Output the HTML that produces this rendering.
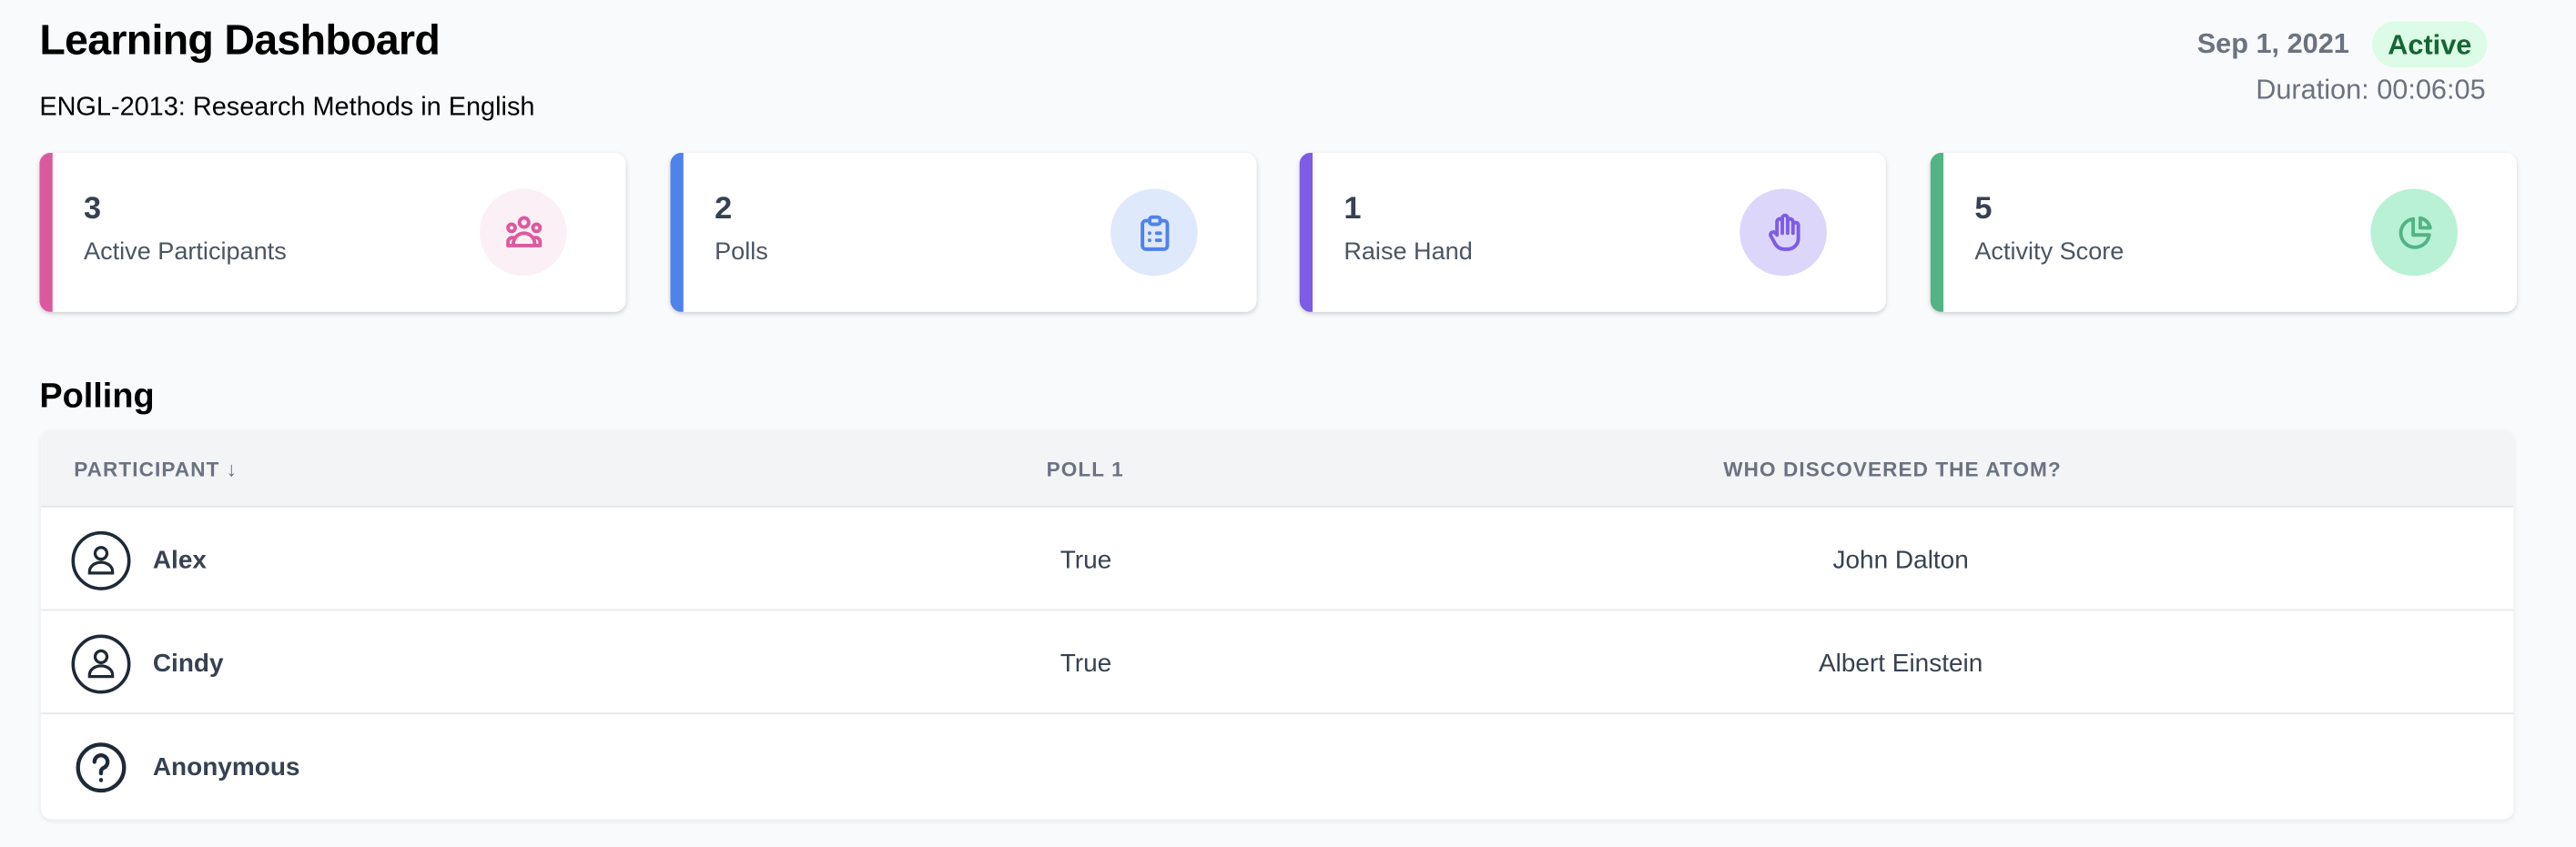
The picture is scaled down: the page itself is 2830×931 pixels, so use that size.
<!DOCTYPE html>
<html><head><meta charset="utf-8"><style>
*{box-sizing:border-box;margin:0;padding:0}
html,body{width:2830px;height:930px;overflow:hidden;background:#f9fafb;font-family:"Liberation Sans",sans-serif}
#w{position:absolute;left:0;top:0;width:1568px;height:516px;transform:scale(1.8048);transform-origin:0 0}
.a{position:absolute}
h1{position:absolute;left:24px;top:11px;font-size:25.8px;font-weight:700;color:#000;letter-spacing:-0.4px}
.sub{left:24px;top:57px;font-size:16px;color:#000;white-space:nowrap}
.date{top:17px;font-size:17px;font-weight:700;color:#6b7280}
.badge{left:1444px;top:13px;width:70px;height:28px;border-radius:14px;background:#dcfce7;color:#166534;font-size:17px;font-weight:700;text-align:center;line-height:29px}
.dur{right:55px;top:45px;font-size:17px;color:#6b7280}
.card{position:absolute;top:93px;width:357px;height:97px;background:#fff;border-radius:7px;box-shadow:0 1px 3px rgba(0,0,0,.12),0 1px 2px rgba(0,0,0,.06);overflow:hidden}
.card .bar{position:absolute;left:0;top:0;bottom:0;width:8px}
.card .n{position:absolute;left:27px;top:24px;font-size:19px;font-weight:700;color:#374151}
.card .l{position:absolute;left:27px;top:52px;font-size:15px;color:#4b5563}
.card .ic{position:absolute;left:268px;top:22px;width:53px;height:53px;border-radius:50%;display:flex;align-items:center;justify-content:center}
.pol{left:24px;top:230px;font-size:21px;font-weight:700;color:#000}
.tbl{position:absolute;left:25px;top:262px;width:1505px;height:237px;background:#fff;border-radius:6px;box-shadow:0 1px 3px rgba(0,0,0,.08);overflow:hidden}
.hd{height:47px;background:#f3f4f6;border-bottom:1px solid #e5e7eb;position:relative}
.hd div{position:absolute;top:17px;font-size:12.5px;font-weight:700;color:#6b7280;letter-spacing:.6px}
.row{height:63px;border-bottom:1px solid #e5e7eb;position:relative}
.row .nm{position:absolute;left:68px;top:24px;font-size:15.5px;font-weight:700;color:#374151}
.row .av{position:absolute;left:18px;top:14px}
.row .c{position:absolute;top:24px;font-size:15.5px;color:#374151;transform:translateX(-50%);white-space:nowrap}
</style></head><body><div id="w">
<h1>Learning Dashboard</h1>
<div class="a sub">ENGL-2013: Research Methods in English</div>
<div class="a date" style="right:138px">Sep 1, 2021</div>
<div class="a badge">Active</div>
<div class="a dur">Duration: 00:06:05</div>

<div class="card" style="left:24px"><div class="bar" style="background:#db5a9e"></div><div class="n">3</div><div class="l">Active Participants</div>
<div class="ic" style="background:#fbf0f6"><svg width="26" height="26" viewBox="0 0 24 24" fill="none" stroke="#db5a9e" stroke-width="2" stroke-linecap="round" stroke-linejoin="round"><circle cx="12" cy="6" r="2.6"/><circle cx="5" cy="9" r="2"/><circle cx="19" cy="9" r="2"/><path d="M6 19v-1a6 6 0 0 1 12 0v1zM3 19v-2.5a2.5 2.5 0 0 1 3-2M21 19v-2.5a2.5 2.5 0 0 0-3-2M3 19h18"/></svg></div></div>

<div class="card" style="left:408px"><div class="bar" style="background:#5082ec"></div><div class="n">2</div><div class="l">Polls</div>
<div class="ic" style="background:#dfe9fc"><svg width="26" height="26" viewBox="0 0 24 24" fill="none" stroke="#5082ec" stroke-width="2" stroke-linecap="round" stroke-linejoin="round"><path d="M9 5H7a2 2 0 0 0-2 2v12a2 2 0 0 0 2 2h10a2 2 0 0 0 2-2V7a2 2 0 0 0-2-2h-2"/><rect x="9" y="3" width="6" height="4" rx="1.5"/><path d="M9 12h.01M13 12h2M9 16h.01M13 16h2"/></svg></div></div>

<div class="card" style="left:791px"><div class="bar" style="background:#7d5ce8"></div><div class="n">1</div><div class="l">Raise Hand</div>
<div class="ic" style="background:#ddd6fb"><svg width="26" height="26" viewBox="0 0 24 24" fill="none" stroke="#7d5ce8" stroke-width="2" stroke-linecap="round" stroke-linejoin="round"><path d="M8 13V5.5a1.5 1.5 0 0 1 3 0V12M11 5.5v-2a1.5 1.5 0 0 1 3 0V12M14 5.5a1.5 1.5 0 0 1 3 0V12M17 7.5a1.5 1.5 0 0 1 3 0V15a6 6 0 0 1-6 6h-2a6 6 0 0 1-5-3l-2.5-4.5a1.5 1.5 0 0 1 2.5-1.6L8 13"/></svg></div></div>

<div class="card" style="left:1175px"><div class="bar" style="background:#52b484"></div><div class="n">5</div><div class="l">Activity Score</div>
<div class="ic" style="background:#b9f1d4"><svg width="26" height="26" viewBox="0 0 24 24" fill="none" stroke="#52b484" stroke-width="2" stroke-linecap="round" stroke-linejoin="round"><path d="M11 4a8 8 0 1 0 9 9h-9z"/><path d="M15 3.5A7 7 0 0 1 20.5 9H15z"/></svg></div></div>

<div class="a pol">Polling</div>
<div class="tbl">
<div class="hd"><div style="left:20px">PARTICIPANT ↓</div><div style="left:612px">POLL 1</div><div style="left:1024px">WHO DISCOVERED THE ATOM?</div></div>
<div class="row"><svg class="av" width="37" height="37" viewBox="0 0 37 37" fill="none" stroke="#1f2937" stroke-width="2"><circle cx="18.5" cy="18.5" r="17"/><circle cx="18.5" cy="14" r="3.6" stroke-width="1.8"/><path d="M11.5 26v-1a7 5.5 0 0 1 14 0v1z" stroke-width="1.8"/></svg><div class="nm">Alex</div><div class="c" style="left:636px">True</div><div class="c" style="left:1132px">John Dalton</div></div>
<div class="row"><svg class="av" width="37" height="37" viewBox="0 0 37 37" fill="none" stroke="#1f2937" stroke-width="2"><circle cx="18.5" cy="18.5" r="17"/><circle cx="18.5" cy="14" r="3.6" stroke-width="1.8"/><path d="M11.5 26v-1a7 5.5 0 0 1 14 0v1z" stroke-width="1.8"/></svg><div class="nm">Cindy</div><div class="c" style="left:636px">True</div><div class="c" style="left:1132px">Albert Einstein</div></div>
<div class="row" style="border-bottom:none"><svg class="av" width="37" height="37" viewBox="0 0 37 37" fill="none" stroke="#1f2937" stroke-width="2.4" stroke-linecap="round"><circle cx="18.5" cy="18.5" r="14"/><path d="M14.5 15a4 4 0 1 1 5.5 3.7c-1 .5-1.5 1.2-1.5 2.3v1"/><path d="M18.5 26v.2"/></svg><div class="nm">Anonymous</div></div>
</div>
</div></body></html>
